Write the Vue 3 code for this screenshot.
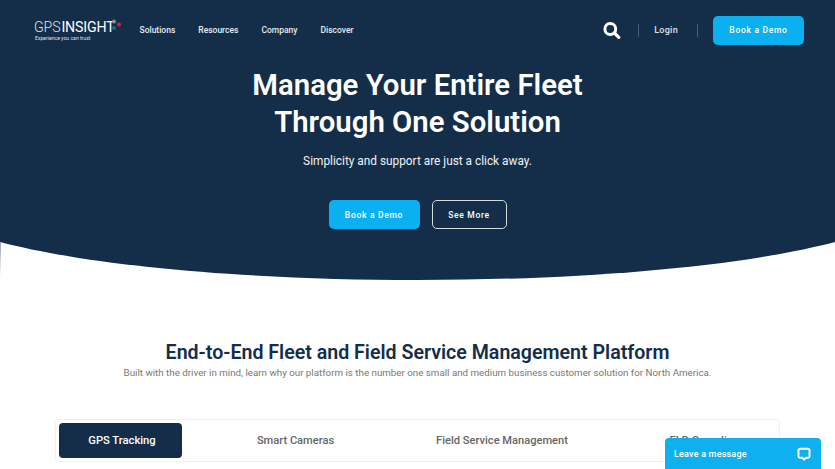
<template>
  <div class="page">
    <section class="hero">
      <header class="topbar">
        <div class="logo">
          <div class="logo-word">GPS<b>INSIGHT</b></div>
          <div class="logo-tag">Experience you can trust</div>
          <svg class="logo-dots" width="12" height="14" viewBox="0 0 12 14">
            <circle cx="3" cy="2.500" r="2" fill="#8c9196" />
            <circle cx="8" cy="5.500" r="2" fill="#e5202e" />
            <circle cx="3" cy="9" r="2" fill="#2f5d94" />
          </svg>
        </div>
        <nav class="menu">
          <a v-for="item in menu" :key="item">{{ item }}</a>
        </nav>
        <div class="actions">
          <svg class="search" width="18" height="17" viewBox="0 0 18 17" fill="none" stroke="#fff">
            <circle cx="7.300" cy="7" r="5.400" stroke-width="3" />
            <path d="M11.500 11 15.800 15.300" stroke-width="3.200" stroke-linecap="round" />
          </svg>
          <span class="sep"></span>
          <a class="login">Login</a>
          <span class="sep"></span>
          <a class="btn btn-blue btn-top">Book a Demo</a>
        </div>
      </header>
      <div class="hero-body">
        <h1>Manage Your Entire Fleet<br />Through One Solution</h1>
        <p>Simplicity and support are just a click away.</p>
        <div class="hero-btns">
          <a class="btn btn-blue">Book a Demo</a>
          <a class="btn btn-line">See More</a>
        </div>
      </div>
    </section>
    <svg class="curve" width="835" height="38" viewBox="0 0 835 38" preserveAspectRatio="none">
      <path d="M0 0H835C740 25 580 38 417.500 38C255 38 95 25 0 0Z" fill="#142d48" />
    </svg>

    <section class="platform">
      <h2>End-to-End Fleet and Field Service Management Platform</h2>
      <p>Built with the driver in mind, learn why our platform is the number one small and medium business customer solution for North America.</p>
      <div class="tabs">
        <button v-for="(tab, i) in tabs" :key="tab" class="tab" :class="{ active: i === 0 }">{{ tab }}</button>
      </div>
    </section>

    <div class="chat">
      <span>Leave a message</span>
      <svg width="14" height="14" viewBox="0 0 16 16" fill="none" stroke="#fff" stroke-width="2.200" stroke-linejoin="round">
        <path d="M3.500 2H12.500A1.800 1.800 0 0 1 14.300 3.800V10.500A1.800 1.800 0 0 1 12.500 12.300H10.500L8 14.500L6.500 12.300H3.500A1.800 1.800 0 0 1 1.700 10.500V3.800A1.800 1.800 0 0 1 3.500 2Z" />
      </svg>
    </div>
  </div>
</template>

<script setup>
const menu = ['Solutions', 'Resources', 'Company', 'Discover']
const tabs = ['GPS Tracking', 'Smart Cameras', 'Field Service Management', 'ELD Compliance']
</script>

<style>
html,
body {
  margin: 0;
  overflow: hidden;
  background: #fff;
}
</style>

<style scoped>
.page {
  position: relative;
  width: 835px;
  height: 469px;
  overflow: hidden;
  font-family: Roboto, "Liberation Sans", sans-serif;
}

/* faint strip on the left edge under the curve */
.page::before {
  content: "";
  position: absolute;
  left: 0;
  top: 242px;
  width: 1px;
  height: 34px;
  background: linear-gradient(#93a3b3, #fff);
}

.hero {
  background: #142d48;
  height: 242px;
  color: #fff;
}

.curve {
  display: block;
}

.topbar {
  display: flex;
  align-items: center;
  height: 60px;
  padding: 0 31px 0 34px;
}

.logo {
  position: relative;
  width: 105.500px;
  color: #dfe3e7;
}

.logo-word {
  font-size: 14.200px;
  line-height: 14px;
  font-weight: 300;
  letter-spacing: -0.150px;
  white-space: nowrap;
}

.logo-word b {
  font-weight: 400;
  color: #fff;
  margin-left: 1px;
}

.logo-tag {
  font-size: 5.100px;
  line-height: 6px;
  margin: 1px 0 0 1px;
  white-space: nowrap;
}

.logo-dots {
  position: absolute;
  left: 77px;
  top: -0.500px;
}

.menu {
  display: flex;
  gap: 23px;
  font-size: 8.500px;
  font-weight: 500;
  color: #e8ebee;
  white-space: nowrap;
}

.actions {
  display: flex;
  align-items: center;
  margin-left: auto;
}

.search {
  margin-right: 17px;
}

.sep {
  width: 1px;
  height: 13px;
  background: #4a5d72;
}

.login {
  font-size: 9px;
  font-weight: 500;
  letter-spacing: 0.300px;
  color: #e0e4e8;
  margin: 0 19px 0 15px;
}

.sep + .login + .sep {
  margin-right: 15px;
}

.btn {
  display: flex;
  align-items: center;
  justify-content: center;
  box-sizing: border-box;
  height: 29px;
  border-radius: 5px;
  font-size: 8.500px;
  font-weight: 500;
  letter-spacing: 0.700px;
  color: #fff;
}

.btn-blue {
  background: #0bb0f0;
  width: 91px;
}

.btn-line {
  width: 75px;
  border: 1.500px solid #d5dadf;
}

.hero-body {
  text-align: center;
}

.hero-body h1 {
  margin: 7px 0 0;
  font-size: 29.350px;
  line-height: 37px;
  font-weight: 600;
}

.hero-body p {
  margin: 12px 0 0;
  font-size: 11.850px;
  line-height: 16px;
  color: #f0f2f4;
}

.hero-btns {
  display: flex;
  justify-content: center;
  gap: 12px;
  margin-top: 31px;
}

.platform {
  text-align: center;
  padding-top: 61px;
}

.platform h2 {
  margin: 0;
  font-size: 19.600px;
  line-height: 24px;
  font-weight: 600;
  color: #142d48;
}

.platform p {
  margin: 1px 0 0;
  font-size: 9.780px;
  line-height: 13px;
  color: #777;
  white-space: nowrap;
}

.tabs {
  display: flex;
  align-items: stretch;
  box-sizing: border-box;
  height: 43px;
  margin: 40px 55.500px 0 55px;
  padding: 3px;
  border: 1px solid #f0f0f0;
  border-radius: 4px;
  overflow: hidden;
}

.tab {
  flex: 0 0 123px;
  border: 0;
  background: none;
  font: 500 11.100px Roboto, "Liberation Sans", sans-serif;
  color: #666;
  white-space: nowrap;
  padding: 0;
}

.tab.active {
  background: #142d48;
  color: #fff;
  border-radius: 4px;
  padding-left: 3px;
  font-size: 11.200px;
}

.tab:nth-child(2) {
  flex-basis: 227px;
}

.tab:nth-child(3) {
  flex-basis: 186px;
}

.tab:nth-child(4) {
  flex-basis: 230px;
}

.chat {
  position: absolute;
  left: 665px;
  top: 438px;
  display: flex;
  align-items: center;
  justify-content: space-between;
  box-sizing: border-box;
  width: 156px;
  height: 31px;
  padding: 0 10px 0 9px;
  background: #0eb0ef;
  border-radius: 4px 4px 0 0;
  color: #fff;
  font-size: 9px;
  font-weight: 500;
  letter-spacing: 0.200px;
}
</style>
